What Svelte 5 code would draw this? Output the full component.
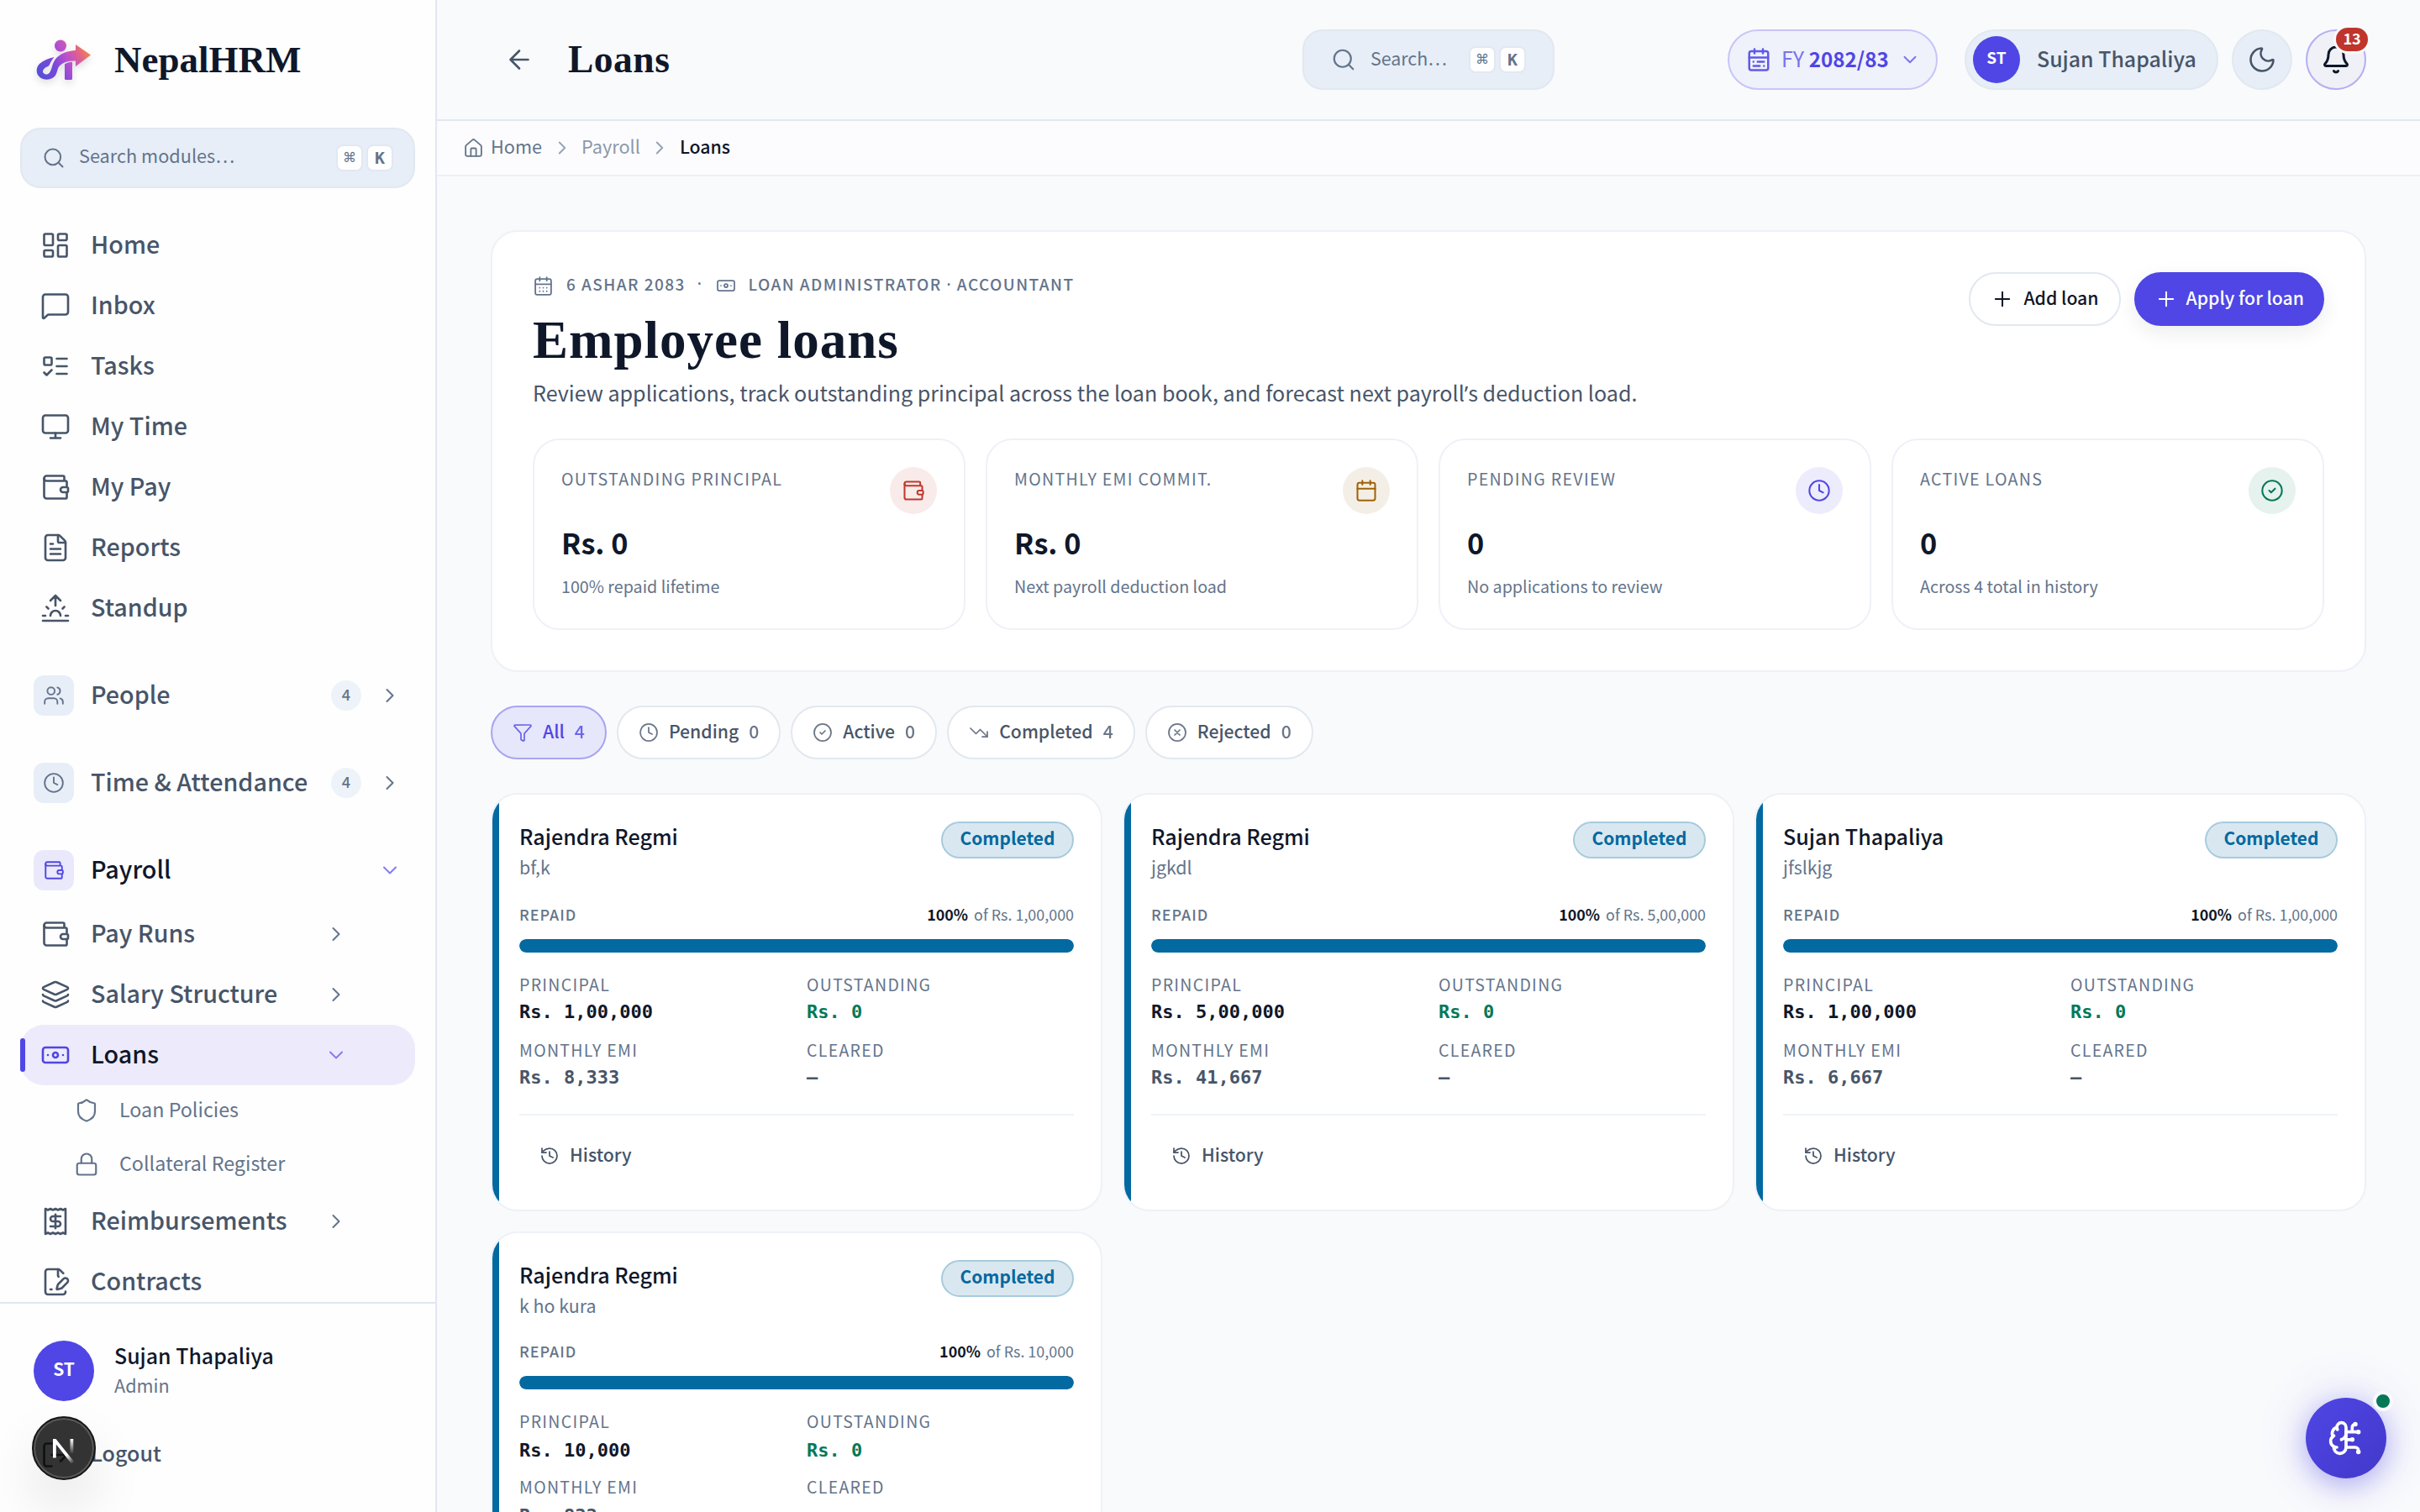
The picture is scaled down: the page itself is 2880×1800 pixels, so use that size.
<script>
	const icons = {
		dashboard:
			'<rect width="7" height="9" x="3" y="3" rx="1"/><rect width="7" height="5" x="14" y="3" rx="1"/><rect width="7" height="9" x="14" y="12" rx="1"/><rect width="7" height="5" x="3" y="16" rx="1"/>',
		message:
			'<path d="M22 17a2 2 0 0 1-2 2H6.828a2 2 0 0 0-1.414.586l-2.202 2.202A.71.71 0 0 1 2 21.286V5a2 2 0 0 1 2-2h16a2 2 0 0 1 2 2z"/>',
		tasks:
			'<rect x="3" y="5" width="6" height="6" rx="1"/><path d="m3 17 2 2 4-4M13 6h8M13 12h8M13 18h8"/>',
		monitor: '<rect width="20" height="14" x="2" y="3" rx="2"/><path d="M8 21h8M12 17v4"/>',
		wallet:
			'<path d="M19 7V4a1 1 0 0 0-1-1H5a2 2 0 0 0 0 4h15a1 1 0 0 1 1 1v4h-3a2 2 0 0 0 0 4h3a1 1 0 0 0 1-1v-2a1 1 0 0 0-1-1"/><path d="M3 5v14a2 2 0 0 0 2 2h15a1 1 0 0 0 1-1v-4"/>',
		file: '<path d="M6 22a2 2 0 0 1-2-2V4a2 2 0 0 1 2-2h8a2.4 2.4 0 0 1 1.704.706l3.588 3.588A2.4 2.4 0 0 1 20 8v12a2 2 0 0 1-2 2z"/><path d="M14 2v5a1 1 0 0 0 1 1h5M10 9H8M16 13H8M16 17H8"/>',
		sunrise:
			'<path d="M12 2v8M4.93 10.93l1.41 1.41M2 18h2M20 18h2M19.07 10.93l-1.41 1.41M22 22H2M8 6l4-4 4 4M16 18a4 4 0 0 0-8 0"/>',
		users:
			'<path d="M16 21v-2a4 4 0 0 0-4-4H6a4 4 0 0 0-4 4v2M16 3.128a4 4 0 0 1 0 7.744M22 21v-2a4 4 0 0 0-3-3.87"/><circle cx="9" cy="7" r="4"/>',
		clock: '<circle cx="12" cy="12" r="10"/><path d="M12 6v6l4 2"/>',
		layers:
			'<path d="M12.83 2.18a2 2 0 0 0-1.66 0L2.6 6.08a1 1 0 0 0 0 1.83l8.58 3.91a2 2 0 0 0 1.66 0l8.58-3.9a1 1 0 0 0 0-1.83z"/><path d="M2 12a1 1 0 0 0 .58.91l8.6 3.91a2 2 0 0 0 1.65 0l8.58-3.9A1 1 0 0 0 22 12"/><path d="M2 17a1 1 0 0 0 .58.91l8.6 3.91a2 2 0 0 0 1.65 0l8.58-3.9A1 1 0 0 0 22 17"/>',
		banknote:
			'<rect width="20" height="12" x="2" y="6" rx="2"/><circle cx="12" cy="12" r="2"/><path d="M6 12h.01M18 12h.01"/>',
		shield:
			'<path d="M20 13c0 5-3.5 7.5-7.66 8.95a1 1 0 0 1-.67-.01C7.5 20.5 4 18 4 13V6a1 1 0 0 1 1-1c2 0 4.5-1.2 6.24-2.72a1.17 1.17 0 0 1 1.52 0C14.51 3.81 17 5 19 5a1 1 0 0 1 1 1z"/>',
		lock: '<rect width="18" height="11" x="3" y="11" rx="2"/><path d="M7 11V7a5 5 0 0 1 10 0v4"/>',
		receipt:
			'<path d="M4 2v20l2-1 2 1 2-1 2 1 2-1 2 1 2-1 2 1V2l-2 1-2-1-2 1-2-1-2 1-2-1-2 1Z"/><path d="M16 8h-6a2 2 0 1 0 0 4h4a2 2 0 1 1 0 4H8M12 17.5v-11"/>',
		contract:
			'<path d="M14.364 13.634a2 2 0 0 0-.506.854l-.837 2.87a.5.5 0 0 0 .62.62l2.87-.837a2 2 0 0 0 .854-.506l4.013-4.009a1 1 0 0 0-3.004-3.004z"/><path d="M14.487 7.858A1 1 0 0 1 14 7V2"/><path d="M20 19.645V20a2 2 0 0 1-2 2H6a2 2 0 0 1-2-2V4a2 2 0 0 1 2-2h8a2.4 2.4 0 0 1 1.704.706l2.516 2.516M8 18h1"/>',
		logout: '<path d="m16 17 5-5-5-5M21 12H9M9 21H5a2 2 0 0 1-2-2V5a2 2 0 0 1 2-2h4"/>',
		search: '<path d="m21 21-4.34-4.34"/><circle cx="11" cy="11" r="8"/>',
		right: '<path d="m9 18 6-6-6-6"/>',
		down: '<path d="m6 9 6 6 6-6"/>',
		back: '<path d="m12 19-7-7 7-7M19 12H5"/>',
		house:
			'<path d="M15 21v-8a1 1 0 0 0-1-1h-4a1 1 0 0 0-1 1v8"/><path d="M3 10a2 2 0 0 1 .709-1.528l7-6a2 2 0 0 1 2.582 0l7 6A2 2 0 0 1 21 10v9a2 2 0 0 1-2 2H5a2 2 0 0 1-2-2z"/>',
		calendarRange:
			'<rect width="18" height="18" x="3" y="4" rx="2"/><path d="M16 2v4M3 10h18M8 2v4M17 14h-6M13 18H7M7 14h.01M17 18h.01"/>',
		calendarDays:
			'<rect width="18" height="18" x="3" y="4" rx="2"/><path d="M8 2v4M16 2v4M3 10h18M8 14h.01M12 14h.01M16 14h.01M8 18h.01M12 18h.01M16 18h.01"/>',
		calendar: '<rect width="18" height="18" x="3" y="4" rx="2"/><path d="M8 2v4M16 2v4M3 10h18"/>',
		moon: '<path d="M20.985 12.486a9 9 0 1 1-9.473-9.472c.405-.022.617.46.402.803a6 6 0 0 0 8.268 8.268c.344-.215.825-.004.803.401"/>',
		bell: '<path d="M10.268 21a2 2 0 0 0 3.464 0"/><path d="M3.262 15.326A1 1 0 0 0 4 17h16a1 1 0 0 0 .74-1.673C19.41 13.956 18 12.499 18 8A6 6 0 0 0 6 8c0 4.499-1.411 5.956-2.738 7.326"/>',
		plus: '<path d="M5 12h14M12 5v14"/>',
		check: '<circle cx="12" cy="12" r="10"/><path d="m9 12 2 2 4-4"/>',
		cross: '<circle cx="12" cy="12" r="10"/><path d="m15 9-6 6M9 9l6 6"/>',
		funnel:
			'<path d="M10 20a1 1 0 0 0 .553.895l2 1A1 1 0 0 0 14 21v-7a2 2 0 0 1 .517-1.341L21.74 4.67A1 1 0 0 0 21 3H3a1 1 0 0 0-.742 1.67l7.225 7.989A2 2 0 0 1 10 14z"/>',
		trend: '<path d="M16 17h6v-6"/><path d="m22 17-8.5-8.5-5 5L2 7"/>',
		history:
			'<path d="M3 12a9 9 0 1 0 9-9 9.75 9.75 0 0 0-6.74 2.74L3 8"/><path d="M3 3v5h5M12 7v5l4 2"/>',
		brain:
			'<path d="M12 5a3 3 0 1 0-5.997.125 4 4 0 0 0-2.526 5.77 4 4 0 0 0 .556 6.588A4 4 0 1 0 12 18Z"/><path d="M9 13a4.5 4.5 0 0 0 3-4M6.003 5.125A3 3 0 0 0 6.401 6.5M3.477 10.896a4 4 0 0 1 .585-.396M6 18a4 4 0 0 1-1.967-.516M12 13h4M12 18h6a2 2 0 0 1 2 2v1M12 8h8M16 8V5a2 2 0 0 1 2-2"/><circle cx="16" cy="13" r=".5"/><circle cx="18" cy="3" r=".5"/><circle cx="20" cy="21" r=".5"/><circle cx="20" cy="8" r=".5"/>'
	};

	const mainNav = [
		{ icon: 'dashboard', label: 'Home' },
		{ icon: 'message', label: 'Inbox' },
		{ icon: 'tasks', label: 'Tasks' },
		{ icon: 'monitor', label: 'My Time' },
		{ icon: 'wallet', label: 'My Pay' },
		{ icon: 'file', label: 'Reports' },
		{ icon: 'sunrise', label: 'Standup' }
	];

	const groups = [
		{ icon: 'users', label: 'People', count: 4 },
		{ icon: 'clock', label: 'Time & Attendance', count: 4 },
		{ icon: 'wallet', label: 'Payroll', open: true }
	];

	const stats = [
		{ label: 'Outstanding principal', value: 'Rs. 0', note: '100% repaid lifetime', icon: 'wallet', tone: 'red' },
		{ label: 'Monthly EMI commit.', value: 'Rs. 0', note: 'Next payroll deduction load', icon: 'calendar', tone: 'amber' },
		{ label: 'Pending review', value: '0', note: 'No applications to review', icon: 'clock', tone: 'indigo' },
		{ label: 'Active loans', value: '0', note: 'Across 4 total in history', icon: 'check', tone: 'green' }
	];

	const filters = [
		{ label: 'All', count: 4, icon: 'funnel' },
		{ label: 'Pending', count: 0, icon: 'clock' },
		{ label: 'Active', count: 0, icon: 'check' },
		{ label: 'Completed', count: 4, icon: 'trend' },
		{ label: 'Rejected', count: 0, icon: 'cross' }
	];

	const loans = [
		{ name: 'Rajendra Regmi', reason: 'bf,k', principal: '1,00,000', emi: '8,333', repaid: 100 },
		{ name: 'Rajendra Regmi', reason: 'jgkdl', principal: '5,00,000', emi: '41,667', repaid: 100 },
		{ name: 'Sujan Thapaliya', reason: 'jfslkjg', principal: '1,00,000', emi: '6,667', repaid: 100 },
		{ name: 'Rajendra Regmi', reason: 'k ho kura', principal: '10,000', emi: '833', repaid: 100 }
	];

	let active = $state('All');
</script>

{#snippet icon(name, size, stroke = 1.75)}
	<svg
		width={size}
		height={size}
		viewBox="0 0 24 24"
		fill="none"
		stroke="currentColor"
		stroke-width={stroke}
		stroke-linecap="round"
		stroke-linejoin="round">{@html icons[name]}</svg
	>
{/snippet}

{#snippet navItem(name, label, chevron)}
	<a class="item" class:current={label === 'Loans'} href="#top">
		{@render icon(name, 36)}
		<span class="t">{label}</span>
		{#if chevron}<i class="chev sub">{@render icon(chevron, 28)}</i>{/if}
	</a>
{/snippet}

<div class="app">
	<aside>
		<div class="brand">
			<svg class="logo" width="68" height="52" viewBox="0 0 68 52">
				<defs>
					<linearGradient id="brand" gradientUnits="userSpaceOnUse" x1="8" y1="46" x2="64" y2="14">
						<stop offset="0" stop-color="#5b4fd6" />
						<stop offset=".3" stop-color="#7a48d8" />
						<stop offset=".55" stop-color="#b74fd0" />
						<stop offset=".78" stop-color="#e0608f" />
						<stop offset="1" stop-color="#f58a3c" />
					</linearGradient>
				</defs>
				<g fill="url(#brand)">
					<circle cx="29" cy="8.500" r="7" />
					<path
						d="M47 7 65 19.500 47 33v-6.500C39 26.300 31 28 27 33.500c-2.500 3.800-2 10-6.500 12.700C16 49.600 9 49.500 4.500 46-.5 42-.5 34.500 4 30c4.500-4.200 11-6.500 17.500-8-3.200 3.600-4.500 7-6.500 10.500-3 1.300-7 3.500-7 6.500 0 3.700 5.700 5 8.200 1.200C19 36 19 30.500 22.500 25c5-7 15-10.500 24.500-11Z"
					/>
					<path d="M34 30.500c2.500-2 5.500-2.700 9-2.800V47.500a1.500 1.500 0 0 1-1.500 1.500h-6a1.500 1.500 0 0 1-1.500-1.500Z" />
				</g>
			</svg>
			<span>NepalHRM</span>
		</div>

		<div class="search side-search">
			{@render icon('search', 28)}
			<span class="t">Search modules…</span>
			<kbd class="cmd">⌘</kbd><kbd>K</kbd>
		</div>

		<nav>
			{#each mainNav as item}
				{@render navItem(item.icon, item.label)}
			{/each}
			{#each groups as group}
				<a class="item group" class:open={group.open} href="#top">
					<i class="tile">{@render icon(group.icon, 26)}</i>
					<span class="t">{group.label}</span>
					{#if group.count}<b class="count"><span class="t">{group.count}</span></b>{/if}
					<i class="chev">{@render icon(group.open ? 'down' : 'right', 28)}</i>
				</a>
			{/each}
			<div class="children">
				{@render navItem('wallet', 'Pay Runs', 'right')}
				{@render navItem('layers', 'Salary Structure', 'right')}
				{@render navItem('banknote', 'Loans', 'down')}
				<div class="leaves">
					<a class="leaf" href="#top">{@render icon('shield', 30)}<span class="t">Loan Policies</span></a>
					<a class="leaf" href="#top">{@render icon('lock', 30)}<span class="t">Collateral Register</span></a>
				</div>
				{@render navItem('receipt', 'Reimbursements', 'right')}
				{@render navItem('contract', 'Contracts')}
			</div>
		</nav>

		<footer>
			<div class="account">
				<span class="avatar"><span class="t">ST</span></span>
				<div>
					<p class="who">Sujan Thapaliya</p>
					<p class="role">Admin</p>
				</div>
			</div>
			<a class="logout" href="#top">{@render icon('logout', 36)}<span class="t">Logout</span></a>
		</footer>
	</aside>

	<main>
		<header>
			<i class="back">{@render icon('back', 36)}</i>
			<h2>Loans</h2>
			<div class="search top-search">
				{@render icon('search', 30)}
				<span class="t">Search…</span>
				<kbd class="cmd">⌘</kbd><kbd>K</kbd>
			</div>
			<button class="fy">
				{@render icon('calendarRange', 30, 2)}
				<span class="t">FY <b>2082/83</b></span>
				{@render icon('down', 26)}
			</button>
			<button class="user">
				<span class="avatar small"><span class="t">ST</span></span>
				<span class="t">Sujan Thapaliya</span>
			</button>
			<button class="round">{@render icon('moon', 36)}</button>
			<button class="round bell">
				{@render icon('bell', 36, 2)}
				<span class="badge"><span class="t">13</span></span>
			</button>
		</header>

		<div class="crumbs">
			{@render icon('house', 25)}
			<span class="t home">Home</span>
			<i>{@render icon('right', 26)}</i>
			<span class="t faint">Payroll</span>
			<i>{@render icon('right', 26)}</i>
			<span class="t here">Loans</span>
		</div>

		<div class="content">
			<section class="hero">
				<div class="intro">
					<div>
						<div class="eyebrow">
							{@render icon('calendarDays', 25)}
							<span class="t date">6 Ashar 2083</span>
							<span class="t dot narrow">·</span>
							{@render icon('banknote', 24)}
							<span class="t role-name">Loan Administrator <span class="narrow">·</span> Accountant</span>
						</div>
						<h1>Employee loans</h1>
						<p class="lead">
							Review applications, track outstanding principal across the loan book, and forecast next
							payroll<span class="narrow">’</span>s deduction load.
						</p>
					</div>
					<div class="actions">
						<button>{@render icon('plus', 28)}<span class="t">Add loan</span></button>
						<button class="primary">{@render icon('plus', 28)}<span class="t">Apply for loan</span></button>
					</div>
				</div>
				<div class="stats">
					{#each stats as stat}
						<div class="stat">
							<div class="stat-top">
								<span class="label">{stat.label}</span>
								<i class="disc {stat.tone}">{@render icon(stat.icon, 28)}</i>
							</div>
							<p class="value">{stat.value}</p>
							<p class="note">{stat.note}</p>
						</div>
					{/each}
				</div>
			</section>

			<div class="filters">
				{#each filters as f}
					<button class:on={active === f.label} onclick={() => (active = f.label)}>
						{@render icon(f.icon, 24)}
						<span class="t">{f.label}</span>
						<span class="t n">{f.count}</span>
					</button>
				{/each}
			</div>

			<section class="loans">
				{#each loans as loan}
					<article>
						<div class="head">
							<div>
								<p class="name">{loan.name}</p>
								<p class="reason">{loan.reason}</p>
							</div>
							<span class="status"><span class="t">Completed</span></span>
						</div>
						<div class="repaid">
							<span class="cap">Repaid</span>
							<span><b>{loan.repaid}%</b> of Rs. {loan.principal}</span>
						</div>
						<div class="track"><div class="fill" style="width: {loan.repaid}%"></div></div>
						<dl>
							<div><dt>Principal</dt><dd class="strong">Rs. {loan.principal}</dd></div>
							<div><dt>Outstanding</dt><dd class="ok">Rs. 0</dd></div>
							<div><dt>Monthly EMI</dt><dd>Rs. {loan.emi}</dd></div>
							<div><dt>Cleared</dt><dd>—</dd></div>
						</dl>
						<div class="foot">
							<button>{@render icon('history', 24)}<span class="t">History</span></button>
						</div>
					</article>
				{/each}
			</section>
		</div>
	</main>

	<button class="fab">{@render icon('brain', 44, 2)}<span class="online"></span></button>

	<div class="devtools">
		<svg width="80" height="80" viewBox="0 0 80 80" fill="none">
			<defs>
				<linearGradient id="diag" gradientUnits="userSpaceOnUse" x1="46" y1="46" x2="54" y2="56">
					<stop stop-color="#fff" />
					<stop offset="1" stop-color="#fff" stop-opacity="0" />
				</linearGradient>
				<linearGradient id="stem" gradientUnits="userSpaceOnUse" x1="0" y1="29" x2="0" y2="47">
					<stop stop-color="#fff" />
					<stop offset="1" stop-color="#fff" stop-opacity="0" />
				</linearGradient>
			</defs>
			<path d="M27 51.500V29h3.500L52 56l-3 2.500L30.800 35.500v16Z" fill="url(#diag)" />
			<path d="M47.500 29h3.800v17h-3.800Z" fill="url(#stem)" />
		</svg>
	</div>
</div>

<style>
	:global(body) {
		margin: 0;
	}
	.app {
		position: relative;
		display: flex;
		width: 2880px;
		height: 1800px;
		overflow: hidden;
		background: #f9fafc;
		color: #0f172a;
		font-family: 'Noto Sans CJK SC', 'Noto Sans', sans-serif;
		font-size: 25px;
		line-height: 1.3;
	}
	.app * {
		box-sizing: border-box;
	}
	p,
	h1,
	h2,
	dl,
	dd {
		margin: 0;
	}
	a {
		color: inherit;
		text-decoration: none;
	}
	i {
		display: flex;
		font-style: normal;
	}
	b {
		font-weight: 500;
	}
	button {
		display: flex;
		align-items: center;
		font: inherit;
		color: inherit;
		padding: 0;
		border: 2px solid #e2e8f0;
		background: #fff;
	}
	svg {
		display: block;
		flex: none;
	}
	/* the font sits low in its line box, this lifts it to the optical centre */
	.t {
		padding-bottom: 0.18em;
		white-space: pre;
	}
	/* CJK fonts draw these marks full width */
	.narrow {
		font-family: 'Noto Sans', sans-serif;
		line-height: 1;
	}

	aside {
		display: flex;
		flex-direction: column;
		flex: none;
		width: 520px;
		height: 1800px;
		border-right: 2px solid #e2e6f3;
		background: #fefefe;
	}
	.brand {
		display: flex;
		flex: none;
		gap: 25px;
		height: 152px;
		padding: 46px 0 0 43px;
		font: bold 45px/50px 'Liberation Serif', serif;
	}
	.logo {
		filter: drop-shadow(0 4px 4px rgb(15 23 42 / 0.14));
	}
	.search {
		display: flex;
		align-items: center;
		flex: none;
		height: 72px;
		border: 2px solid #e2e8f0;
		border-radius: 24px;
		background: #e7eef7;
		color: #64748b;
	}
	.side-search {
		width: 470px;
		margin: 0 24px 32px;
		padding: 0 24px;
		font-size: 21.700px;
	}
	.side-search .t {
		margin: 0 auto 0 16px;
		padding-bottom: 0.28em;
	}
	kbd {
		display: flex;
		align-items: center;
		justify-content: center;
		width: 32px;
		height: 32px;
		border: 2px solid #e2e8f0;
		border-radius: 8px;
		background: #fff;
		font: bold 20px/1 'DejaVu Sans Mono', monospace;
	}
	kbd + kbd {
		margin-left: 4px;
	}
	.cmd {
		font: 16px/1 'DejaVu Sans', sans-serif;
	}

	nav {
		flex: 1;
		min-height: 0;
		overflow: hidden;
		padding: 0 24px;
		color: #475569;
	}
	.item {
		position: relative;
		display: flex;
		align-items: center;
		gap: 24px;
		height: 72px;
		padding: 0 16px 0 24px;
		border-radius: 28px;
		font-size: 28.700px;
		font-weight: 500;
	}
	.group {
		gap: 20px;
		margin-top: 32px;
		padding-left: 16px;
	}
	.tile {
		align-items: center;
		justify-content: center;
		width: 48px;
		height: 48px;
		border-radius: 12px;
		background: #e7eef7;
		color: #64748b;
	}
	.count {
		display: flex;
		align-items: center;
		justify-content: center;
		width: 36px;
		height: 36px;
		margin-left: auto;
		border-radius: 18px;
		background: #eef3f9;
		color: #64748b;
		font-size: 18px;
	}
	.chev {
		margin-left: auto;
		color: #64748b;
	}
	.count + .chev {
		margin-left: 0;
	}
	.chev.sub {
		margin-right: 64px;
	}
	.open,
	.current {
		color: #0f172a;
	}
	.open .tile {
		background: #eae8fb;
		color: #4f46e5;
	}
	.open .chev,
	.current .chev {
		color: #847df0;
	}
	.children {
		padding-top: 4px;
	}
	.current {
		background: #edebfb;
	}
	.current > :global(svg) {
		color: #4f46e5;
	}
	.current::before {
		content: '';
		position: absolute;
		left: 0;
		top: 16px;
		width: 6px;
		height: 40px;
		border-radius: 3px;
		background: #4f46e5;
	}
	.leaves {
		display: grid;
		gap: 4px;
		padding: 0 0 2px 64px;
	}
	.leaf {
		display: flex;
		align-items: center;
		gap: 24px;
		height: 60px;
		color: #64748b;
		font-size: 23.300px;
	}

	footer {
		flex: none;
		height: 250px;
		padding: 44px 40px 0;
		border-top: 2px solid #e2e6f3;
	}
	.account {
		display: flex;
		gap: 24px;
		height: 72px;
	}
	.avatar {
		display: flex;
		align-items: center;
		justify-content: center;
		flex: none;
		width: 72px;
		height: 72px;
		border-radius: 50%;
		background: #4f46e5;
		color: #fff;
		font-size: 21px;
		font-weight: 700;
	}
	.avatar .t {
		padding-bottom: 0.24em;
	}
	.avatar.small {
		width: 56px;
		height: 56px;
		font-size: 19px;
	}
	.who {
		font-size: 24.900px;
		font-weight: 500;
		line-height: 35px;
	}
	.role {
		color: #64748b;
		font-size: 21.600px;
		line-height: 36px;
	}
	.logout {
		display: flex;
		align-items: center;
		gap: 24px;
		height: 72px;
		margin-top: 28px;
		padding-left: 8px;
		color: #475569;
		font-size: 25px;
		font-weight: 500;
	}
	.logout .t {
		padding-bottom: 0.22em;
	}

	main {
		flex: 1;
		min-width: 0;
	}
	header {
		display: flex;
		align-items: center;
		height: 144px;
		padding: 0 64px 0 80px;
		border-bottom: 2px solid #e2e8f0;
	}
	header button {
		height: 72px;
		border-radius: 36px;
	}
	.back {
		color: #475569;
	}
	h2 {
		width: 200px;
		margin-left: 40px;
		font: bold 45.500px/50px 'Liberation Serif', serif;
		letter-spacing: 0.5px;
	}
	.top-search {
		width: 300px;
		margin: 0 206px 0 674px;
		padding: 0 32px;
		font-size: 21.400px;
	}
	.top-search .t {
		margin: 0 auto 0 17px;
	}
	.fy {
		gap: 12px;
		width: 250px;
		padding: 0 18px 0 20px;
		border-color: #c8c5f7;
		background: #eff1fb;
		color: #7a73ec;
	}
	.fy > :global(svg:first-child) {
		color: #6159e8;
	}
	.fy b {
		color: #4f46e5;
		font-size: 24.200px;
		font-weight: 700;
	}
	.user {
		gap: 20px;
		width: 302px;
		margin: 0 16px 0 32px;
		padding-left: 8px;
		background: #e7eef7;
		color: #475569;
		font-size: 24.900px;
		font-weight: 500;
	}
	.round {
		position: relative;
		justify-content: center;
		width: 72px;
		background: #e7eef7;
		color: #475569;
	}
	.bell {
		margin-left: 16px;
		border-color: #b3aff3;
		background: #eff1f7;
		color: #0f172a;
	}
	.badge {
		position: absolute;
		top: -7px;
		right: -7px;
		display: flex;
		align-items: center;
		justify-content: center;
		width: 44px;
		height: 34px;
		border: 3px solid #f9fafc;
		border-radius: 17px;
		background: #c0352b;
		color: #fff;
		font-size: 18px;
		font-weight: 700;
	}

	.crumbs {
		display: flex;
		align-items: center;
		height: 66px;
		padding-left: 31px;
		border-bottom: 2px solid #eceff6;
		background: #fcfcfe;
		color: #64748b;
		font-size: 21.700px;
	}
	.crumbs .t {
		padding-bottom: 0.22em;
	}
	.crumbs i {
		margin: 0 10.500px;
		color: #94a3b8;
	}
	.home {
		margin-left: 8px;
	}
	.faint {
		color: #8d99ab;
	}
	.here {
		color: #0f172a;
		font-size: 21.300px;
		font-weight: 500;
	}

	.content {
		padding: 64px;
	}
	.hero {
		height: 526px;
		padding: 48px;
		border: 2px solid #eef1f7;
		border-radius: 32px;
		background: #fff;
	}
	.intro {
		display: flex;
		justify-content: space-between;
		height: 198px;
	}
	.eyebrow {
		display: flex;
		align-items: center;
		height: 32px;
		color: #64748b;
		font-size: 19px;
		font-weight: 500;
		letter-spacing: 1.450px;
		text-transform: uppercase;
	}
	.date {
		margin-left: 15px;
	}
	.dot {
		margin: 0 16px 0 14px;
	}
	.role-name {
		margin-left: 14px;
	}
	h1 {
		margin-top: 16px;
		font: bold 63px/66px 'Liberation Serif', serif;
		letter-spacing: 1px;
	}
	.lead {
		margin-top: 9px;
		color: #475569;
		font-size: 25.100px;
		line-height: 40px;
		white-space: nowrap;
	}
	.actions {
		display: flex;
		gap: 16px;
		font-size: 21.200px;
		font-weight: 500;
	}
	.actions button {
		gap: 11px;
		height: 64px;
		padding: 0 24px;
		border-radius: 32px;
	}
	.actions .t,
	.filters .t,
	.foot .t {
		padding-bottom: 0.24em;
	}
	.actions .primary {
		gap: 10px;
		padding: 0 22px;
		border-color: #4f46e5;
		background: #4f46e5;
		color: #fff;
		box-shadow: 0 8px 24px rgb(15 23 42 / 0.08);
	}

	.stats {
		display: grid;
		grid-template-columns: repeat(4, 1fr);
		gap: 24px;
	}
	.stat {
		height: 228px;
		padding: 32px;
		border: 2px solid #eef1f7;
		border-radius: 32px;
	}
	.stat-top {
		display: flex;
		justify-content: space-between;
		height: 56px;
	}
	.label {
		color: #64748b;
		font-size: 19.600px;
		line-height: 28px;
		letter-spacing: 1.300px;
		text-transform: uppercase;
	}
	.disc {
		align-items: center;
		justify-content: center;
		width: 56px;
		height: 56px;
		border-radius: 50%;
	}
	.red {
		background: #f9ebea;
		color: #c0392b;
	}
	.amber {
		background: #f4efe6;
		color: #a16207;
	}
	.indigo {
		background: #edecfc;
		color: #4f46e5;
	}
	.green {
		background: #e5f2ee;
		color: #047857;
	}
	.value {
		margin-top: 11px;
		font-size: 34.300px;
		font-weight: 700;
		line-height: 44px;
	}
	.note {
		margin-top: 16px;
		color: #64748b;
		font-size: 19.700px;
		line-height: 30px;
	}

	.filters {
		display: flex;
		gap: 12px;
		margin: 40px 0;
	}
	.filters button {
		gap: 12px;
		height: 64px;
		padding: 0 24px;
		border-radius: 32px;
		color: #475569;
		font-size: 21.200px;
		font-weight: 500;
	}
	.filters button > :global(svg),
	.n {
		opacity: 0.8;
	}
	.filters .on {
		border-color: #a9a4f2;
		background: #e6e7fa;
		color: #4f46e5;
	}

	.loans {
		display: grid;
		grid-template-columns: repeat(3, 1fr);
		gap: 24px;
	}
	article {
		position: relative;
		height: 498px;
		padding: 32px;
		overflow: hidden;
		border: 2px solid #eef1f7;
		border-radius: 32px;
		background: #fff;
	}
	article::before {
		content: '';
		position: absolute;
		inset: 0 auto 0 0;
		width: 8px;
		background: #0369a1;
	}
	.head {
		display: flex;
		justify-content: space-between;
		height: 68px;
	}
	.name {
		font-size: 25.100px;
		font-weight: 500;
		line-height: 35px;
	}
	.reason {
		margin-top: 3px;
		color: #64748b;
		font-size: 21.400px;
		line-height: 32px;
	}
	.status {
		display: flex;
		align-items: center;
		justify-content: center;
		width: 158px;
		height: 44px;
		border: 2px solid #a6cbde;
		border-radius: 22px;
		background: #d9e8f0;
		color: #0369a1;
		font-size: 20.900px;
		font-weight: 700;
	}
	.status .t {
		padding-bottom: 0.22em;
	}
	.repaid {
		display: flex;
		justify-content: space-between;
		margin-top: 28px;
		color: #64748b;
		font-size: 17.900px;
		line-height: 28px;
	}
	.repaid b {
		margin-right: 3px;
		color: #0f172a;
		font-weight: 700;
	}
	.cap {
		font-weight: 500;
		letter-spacing: 1px;
		text-transform: uppercase;
	}
	.track {
		height: 16px;
		margin-top: 16px;
		overflow: hidden;
		border-radius: 8px;
		background: #e7eef7;
	}
	.fill {
		height: 100%;
		border-radius: 8px;
		background: #0369a1;
	}
	dl {
		display: grid;
		grid-template-columns: 1fr 1fr;
		gap: 15px 24px;
		margin-top: 24px;
	}
	dt {
		color: #64748b;
		font-size: 19.500px;
		line-height: 28px;
		letter-spacing: 1.300px;
		text-transform: uppercase;
	}
	dd {
		margin-top: 3px;
		color: #475569;
		font: bold 22px/32px 'DejaVu Sans Mono', monospace;
	}
	/* second row of the grid */
	article:nth-child(n + 4) .repaid {
		margin-top: 26px;
	}
	article:nth-child(n + 4) dl {
		row-gap: 13px;
	}
	article:nth-child(n + 4) dd {
		margin-top: 5px;
	}
	.strong {
		color: #0f172a;
	}
	.ok {
		color: #047857;
	}
	.foot {
		margin-top: 27px;
		padding-top: 16px;
		border-top: 2px solid #eef3f8;
	}
	.foot button {
		gap: 12px;
		height: 64px;
		padding-left: 22px;
		border-color: transparent;
		background: none;
		color: #475569;
		font-size: 21.300px;
		font-weight: 500;
	}

	.fab {
		position: absolute;
		left: 2744px;
		top: 1664px;
		justify-content: center;
		width: 96px;
		height: 96px;
		border: 0;
		border-radius: 50%;
		background: linear-gradient(135deg, #4f46e5, #4338ca);
		color: #fff;
		box-shadow:
			0 8px 32px rgb(79 70 229 / 0.38),
			0 0 64px rgb(79 70 229 / 0.16);
	}
	.online {
		position: absolute;
		top: -8px;
		right: -8px;
		width: 24px;
		height: 24px;
		border: 4px solid #f9fafc;
		border-radius: 50%;
		background: #047857;
	}
	.devtools {
		position: absolute;
		left: 38px;
		top: 1686px;
		display: flex;
		align-items: center;
		justify-content: center;
		width: 76px;
		height: 76px;
		border: 2px solid #171717;
		border-radius: 50%;
		background: rgb(0 0 0 / 0.8);
		box-shadow:
			inset 0 0 0 2px #5a5a5a,
			0 32px 64px rgb(0 0 0 / 0.1);
	}
</style>
